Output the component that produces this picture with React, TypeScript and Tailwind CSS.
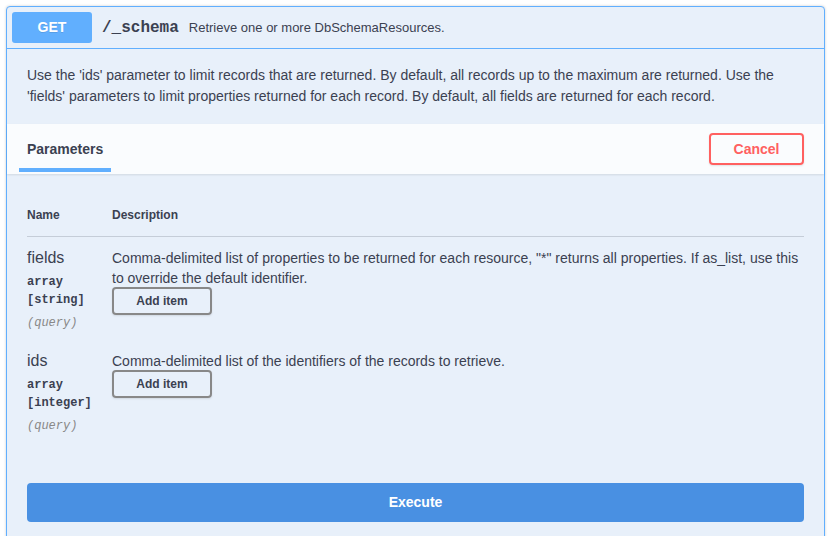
import React from 'react';

const sans = { fontFamily: '"Liberation Sans", Arial, sans-serif' };

const ParamRow: React.FC<{ name: string; type: string; item: string; desc: React.ReactNode }> = ({ name, type, item, desc }) => (
  <div className="flex pt-[11px] pb-[8px]">
    <div className="w-[85px] shrink-0">
      <div className="text-[16px] leading-[20px] text-[#3b4151]">{name}</div>
      <div className="py-[5px] font-['Liberation_Mono',monospace] text-[12px] font-bold leading-[18px] text-[#3b4151]">
        <div>{type}</div>
        <div>{item}</div>
      </div>
      <div className="font-['Liberation_Mono',monospace] text-[12px] italic leading-[18px] text-[#888]">(query)</div>
    </div>
    <div className="flex-1">
      <div className="text-[14px] leading-[20px] text-[#3b4151]">{desc}</div>
      <button className="mt-[-1px] h-[28px] w-[100px] rounded-[4px] border-2 border-[#888] text-[12px] font-bold text-[#3b4151] shadow-[0_1px_2px_rgba(0,0,0,0.1)]">
        Add item
      </button>
    </div>
  </div>
);

export default function App() {
  return (
    <div className="min-h-screen bg-white pt-[6px] pl-[6px] pr-[6px]" style={sans}>
      <div className="rounded-[4px] border border-[#61affe] bg-[#e8f0fa] shadow-[0_0_3px_rgba(0,0,0,0.19)]">
        {/* summary */}
        <div className="flex items-center border-b border-[#61affe] p-[5px]">
          <div className="flex h-[31px] w-[80px] items-center justify-center rounded-[3px] bg-[#61affe] text-[14px] font-bold text-white [text-shadow:0_1px_0_rgba(0,0,0,0.1)]">
            GET
          </div>
          <div className="px-[10px] font-['Liberation_Mono',monospace] text-[16px] font-bold text-[#3b4151]">/_schema</div>
          <div className="text-[13px] text-[#3b4151]">Retrieve one or more DbSchemaResources.</div>
        </div>

        {/* description */}
        <div className="px-[20px] pt-[16px] pb-[17px] text-[14px] leading-[21px] text-[#3b4151]">
          Use the 'ids' parameter to limit records that are returned. By default, all records up to the maximum are returned. Use the 'fields' parameters to limit properties returned for each record. By default, all fields are returned for each record.
        </div>

        {/* parameters header */}
        <div className="flex h-[50px] items-center justify-between bg-white/80 px-[20px] shadow-[0_1px_2px_rgba(0,0,0,0.1)]">
          <div className="relative flex h-full items-center pt-[1px]">
            <span className="text-[14px] font-bold text-[#3b4151]">Parameters</span>
            <div className="absolute bottom-[2px] left-[-8px] h-[4px] w-[92px] bg-[#61affe]" />
          </div>
          <button className="h-[32px] w-[95px] rounded-[4px] border-2 border-[#ff6060] bg-transparent text-[14px] font-bold text-[#ff6060] shadow-[0_1px_2px_rgba(0,0,0,0.1)]">
            Cancel
          </button>
        </div>

        {/* parameters table */}
        <div className="px-[20px] pt-[20px]">
          <div className="flex border-b border-[#c5cdd8] pt-[14px] pb-[14px] text-[12px] font-bold leading-[14px] text-[#3b4151]">
            <div className="w-[85px]">Name</div>
            <div>Description</div>
          </div>
          <ParamRow
            name="fields"
            type="array"
            item="[string]"
            desc={<>Comma-delimited list of properties to be returned for each resource, "*" returns all properties. If as_list, use this to override the default identifier.</>}
          />
          <ParamRow
            name="ids"
            type="array"
            item="[integer]"
            desc="Comma-delimited list of the identifiers of the records to retrieve."
          />
        </div>

        {/* execute */}
        <div className="p-[20px] pt-[40px]">
          <button className="h-[39px] w-full rounded-[4px] bg-[#4990e2] text-[14px] font-bold text-white">Execute</button>
        </div>
      </div>
    </div>
  );
}
